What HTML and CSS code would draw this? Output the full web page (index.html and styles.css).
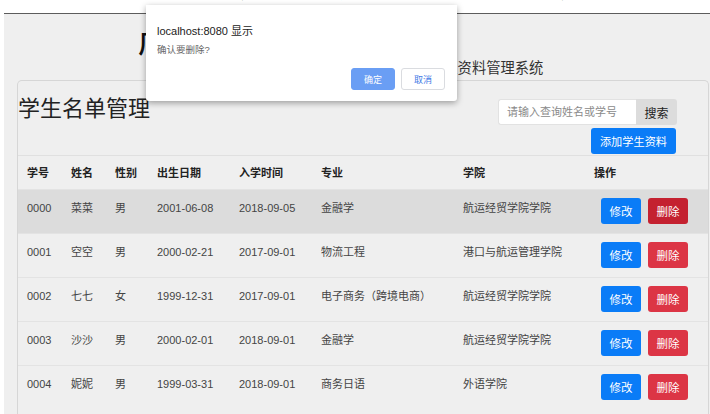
FILE: index.html
```html
<!DOCTYPE html>
<html lang="zh-CN">
<head>
<meta charset="utf-8">
<title>学生名单管理</title>
<link rel="stylesheet" href="styles.css">
</head>
<body>
<div class="topstrip"><p class="topstrip-text">点击删除按钮后弹出确认框，确认后调用接口删除该学生的资料，取消则不执行任何操作并关闭弹窗，随后刷新列表。</p></div>
<div class="window">
  <header class="masthead">
    <h1 class="brand">广州航海学院</h1>
    <p class="subtitle">学生资料管理系统</p>
  </header>
  <section class="card">
    <div class="card-head">
      <h2 class="card-title">学生名单管理</h2>
      <div class="tools">
        <div class="search">
          <input class="search-input" type="text" placeholder="请输入查询姓名或学号">
          <button class="search-btn">搜索</button>
        </div>
        <button class="btn btn-primary add-btn">添加学生资料</button>
      </div>
    </div>
    <table class="grid">
      <colgroup>
        <col class="c-id"><col class="c-name"><col class="c-sex"><col class="c-birth"><col class="c-enrol"><col class="c-major"><col class="c-college"><col class="c-ops">
      </colgroup>
      <thead>
        <tr><th class="first">学号</th><th>姓名</th><th>性别</th><th>出生日期</th><th>入学时间</th><th>专业</th><th>学院</th><th>操作</th></tr>
      </thead>
      <tbody>
        <tr class="hover"><td class="first">0000</td><td>菜菜</td><td>男</td><td>2001-06-08</td><td>2018-09-05</td><td>金融学</td><td>航运经贸学院学院</td><td class="ops"><button class="btn btn-primary">修改</button><button class="btn btn-danger active">删除</button></td></tr>
        <tr><td class="first">0001</td><td>空空</td><td>男</td><td>2000-02-21</td><td>2017-09-01</td><td>物流工程</td><td>港口与航运管理学院</td><td class="ops"><button class="btn btn-primary">修改</button><button class="btn btn-danger">删除</button></td></tr>
        <tr><td class="first">0002</td><td>七七</td><td>女</td><td>1999-12-31</td><td>2017-09-01</td><td>电子商务（跨境电商）</td><td>航运经贸学院学院</td><td class="ops"><button class="btn btn-primary">修改</button><button class="btn btn-danger">删除</button></td></tr>
        <tr><td class="first">0003</td><td>沙沙</td><td>男</td><td>2000-02-01</td><td>2018-09-01</td><td>金融学</td><td>航运经贸学院学院</td><td class="ops"><button class="btn btn-primary">修改</button><button class="btn btn-danger">删除</button></td></tr>
        <tr><td class="first">0004</td><td>妮妮</td><td>男</td><td>1999-03-31</td><td>2018-09-01</td><td>商务日语</td><td>外语学院</td><td class="ops"><button class="btn btn-primary">修改</button><button class="btn btn-danger">删除</button></td></tr>
      </tbody>
    </table>
  </section>
</div>
<div class="dialog">
  <p class="dialog-title">localhost:8080 显示</p>
  <p class="dialog-msg">确认要删除?</p>
  <div class="dialog-actions">
    <button class="dlg-btn dlg-ok">确定</button>
    <button class="dlg-btn dlg-cancel">取消</button>
  </div>
</div>
</body>
</html>
```
FILE: styles.css
```css
* { box-sizing: border-box; }
html, body { margin: 0; padding: 0; }
body {
  background: #ffffff;
  font-family: "Liberation Sans", "Noto Sans CJK SC", sans-serif;
  color: #333;
  width: 710px;
  height: 414px;
  overflow: hidden;
  position: relative;
}
.topstrip {
  height: 13px;
  overflow: hidden;
  background: #fff;
}
.topstrip-text {
  margin: -15px 0 0 0;
  font-size: 14px;
  line-height: 16px;
  white-space: nowrap;
  color: #222;
  letter-spacing: 6px;
}
.window {
  margin-left: 4px;
  background: #efefef;
  border-top: 1px solid #5c5c5c;
  height: 401px;
  overflow: hidden;
}
.masthead {
  padding-top: 15px;
  padding-bottom: 3px;
}
.brand {
  margin: 0;
  padding-left: 134px;
  font-size: 28px;
  line-height: 30px;
  font-weight: 500;
  color: #111;
  white-space: nowrap;
}
.subtitle {
  margin: 0;
  padding-left: 425px;
  font-size: 14.3px;
  line-height: 18px;
  color: #333;
}
.card {
  margin-left: 13px;
  margin-right: 1px;
  border: 1px solid #d6d6d6;
  border-bottom: none;
  border-radius: 5px 5px 0 0;
  height: 400px;
}
.card-head {
  display: flex;
  justify-content: space-between;
  align-items: flex-start;
  padding-top: 14px;
  padding-bottom: 1px;
}
.card-title {
  margin: 0;
  font-size: 22px;
  line-height: 28px;
  font-weight: 400;
  color: #222;
}
.tools {
  margin-top: 4px;
  padding-right: 31px;
  display: flex;
  flex-direction: column;
  align-items: flex-end;
  gap: 3px;
}
.search { display: flex; }
.search-input {
  width: 138px;
  height: 26px;
  border: 1px solid #e2e2e2;
  border-right: none;
  border-radius: 3px 0 0 3px;
  background: #fff;
  padding: 0 8px;
  font-family: inherit;
  font-size: 11px;
  outline: none;
}
.search-input::placeholder { color: #8a8a8a; }
.search-btn {
  width: 41px;
  height: 26px;
  border: none;
  border-radius: 0 3px 3px 0;
  background: #dcdcdc;
  color: #222;
  font-family: inherit;
  font-size: 12px;
  padding: 0;
}
.btn {
  height: 26px;
  border: none;
  border-radius: 3px;
  color: #fff;
  font-family: inherit;
  font-size: 11.5px;
  padding: 0 8px;
  cursor: pointer;
}
.btn-primary { background: #0a7cf7; }
.btn-danger { background: #dc3545; }
.btn-danger.active { background: #c42130; }
.add-btn { width: 85px; padding: 0; margin-right: 1px; font-size: 11.2px; }
.grid {
  width: 100%;
  table-layout: fixed;
  border-collapse: separate;
  border-spacing: 0;
  font-size: 11px;
}
.c-id { width: 43px; }
.c-name { width: 44px; }
.c-sex { width: 42px; }
.c-birth { width: 82px; }
.c-enrol { width: 82px; }
.c-major { width: 142px; }
.c-college { width: 131px; }
.c-ops { width: 124px; }
.grid th {
  text-align: left;
  font-weight: 700;
  color: #222;
  border-top: 1px solid #e0e0e0;
  height: 34px;
  padding: 0 0 0 10px;
  line-height: 18px;
  vertical-align: middle;
}
.grid td {
  border-top: 1px solid #e3e3e3;
  padding: 9px 0 9px 10px;
  line-height: 18px;
  vertical-align: top;
  color: #444;
  white-space: nowrap;
  height: 44px;
}
.grid .first { padding-left: 9px; }
.grid tr.hover td { background: #dcdcdc; }
.grid td.ops { padding-left: 17px; }
.grid td.ops .btn { margin-top: -1px; width: 40px; padding: 0; vertical-align: top; }
.grid td.ops .btn + .btn { margin-left: 7px; }
.dialog {
  position: absolute;
  left: 146px;
  top: 5px;
  width: 311px;
  height: 96px;
  background: #fff;
  border-radius: 0 0 3px 3px;
  box-shadow: 0 2px 6px rgba(0,0,0,0.35);
  padding: 19px 12px 0 11px;
}
.dialog-title {
  margin: 0;
  font-size: 11px;
  line-height: 14px;
  color: #222;
}
.dialog-msg {
  margin: 6px 0 0 0;
  font-size: 9.5px;
  line-height: 12px;
  color: #666;
}
.dialog-actions {
  margin-top: 12px;
  display: flex;
  justify-content: flex-end;
  gap: 6px;
}
.dlg-btn {
  width: 44px;
  height: 22px;
  border-radius: 3px;
  font-family: inherit;
  font-size: 9px;
  padding: 0;
}
.dlg-ok { background: #6a9ef4; color: #fff; border: 1px solid #6a9ef4; }
.dlg-cancel { background: #fff; color: #3f7be6; border: 1px solid #dadce0; }
```
